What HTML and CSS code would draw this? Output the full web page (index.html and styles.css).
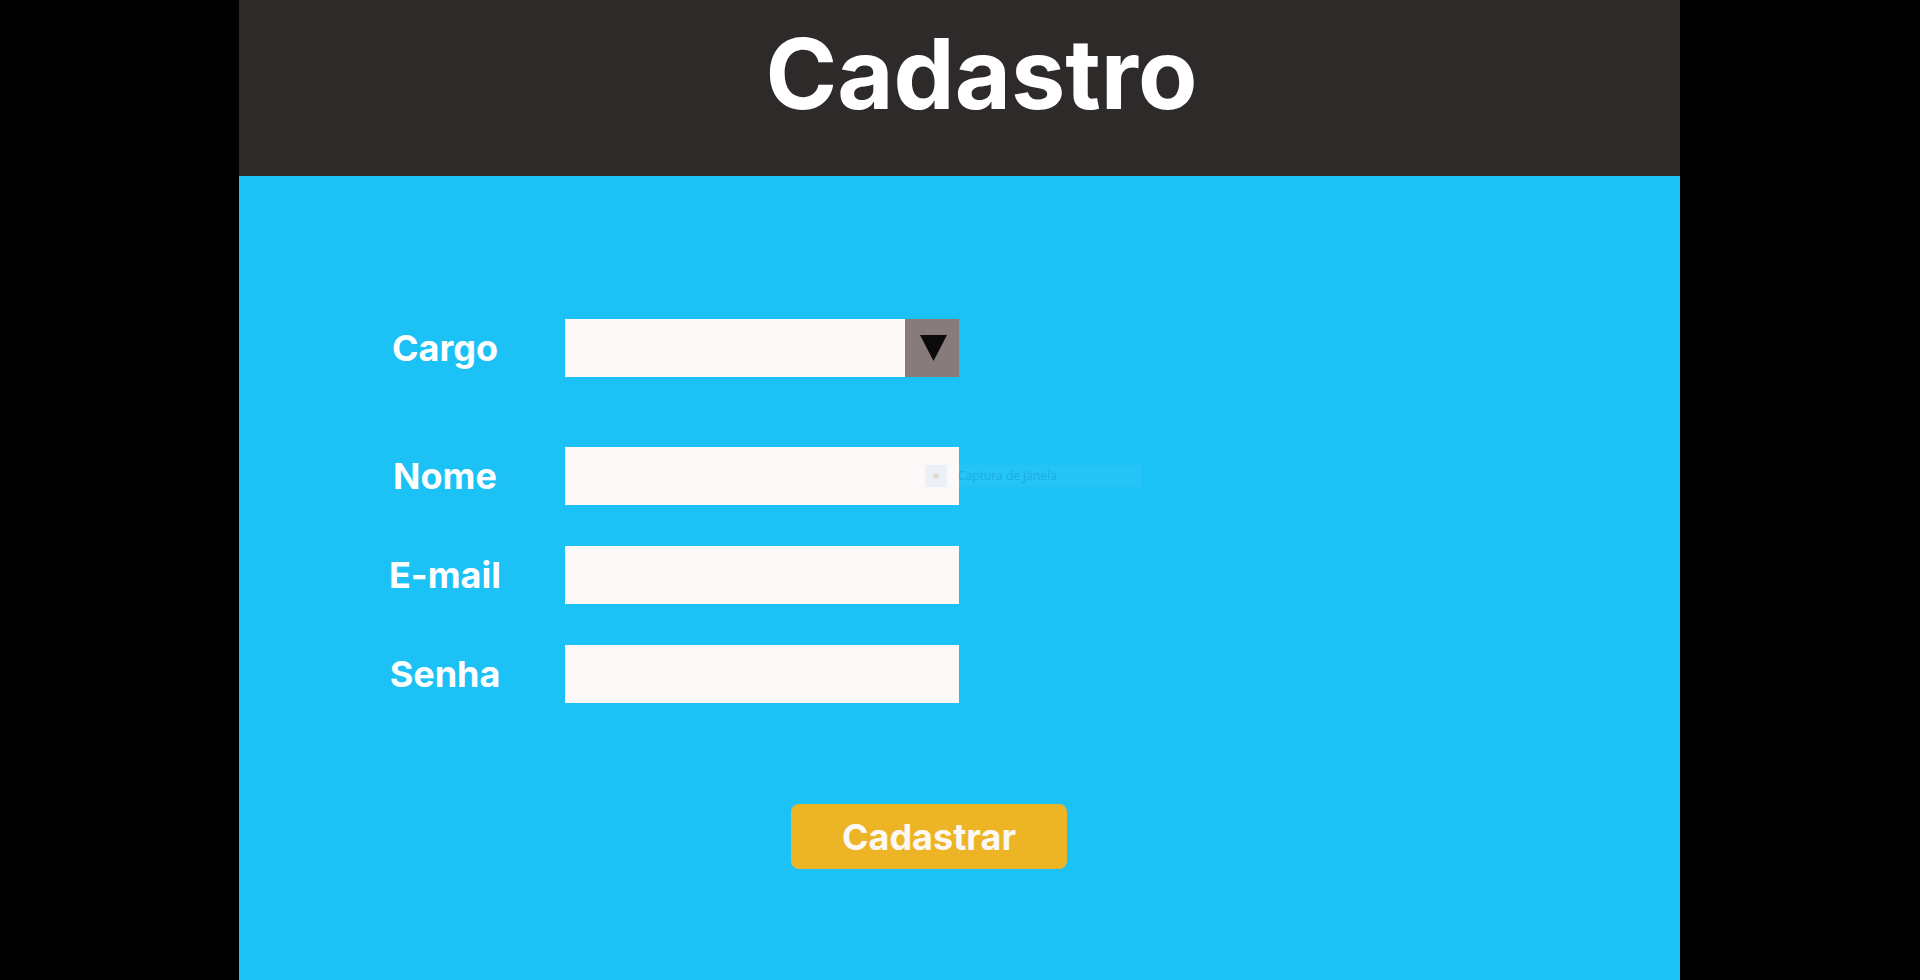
FILE: index.html
```html
<!DOCTYPE html>
<html lang="pt-BR">
<head>
<meta charset="utf-8">
<title>Cadastro</title>
<link rel="stylesheet" href="styles.css">
</head>
<body>
<div class="page">
  <header class="header">
    <h1 class="title">Cadastro</h1>
  </header>
  <main class="main">
    <form class="form">
      <div class="field field-first">
        <label class="label">Cargo</label>
        <div class="select">
          <div class="select-value"></div>
          <div class="select-arrow">
            <svg width="27" height="26" viewBox="0 0 27 26"><polygon points="0,0 27,0 13.5,26" fill="#0b0b0b"/></svg>
          </div>
        </div>
      </div>
      <div class="field">
        <label class="label">Nome</label>
        <input class="input" type="text">
      </div>
      <div class="field">
        <label class="label">E-mail</label>
        <input class="input" type="text">
      </div>
      <div class="field">
        <label class="label">Senha</label>
        <input class="input" type="password">
      </div>
      <div class="actions">
        <button class="button" type="button">Cadastrar</button>
      </div>
    </form>
    <div class="capture-tip">
      <span class="capture-icon"><span class="capture-dot"></span></span>
      <span class="capture-text">Captura de Janela</span>
    </div>
  </main>
</div>
</body>
</html>
```
FILE: styles.css
```css
html, body {
  margin: 0;
  padding: 0;
  background: #000;
}

body {
  font-family: "Inter", "Noto Sans", sans-serif;
  overflow: hidden;
}

.page {
  width: 1441px;
  margin: 0 0 0 239px;
  height: 980px;
  overflow: hidden;
  background: #1cc2f6;
}

.header {
  height: 176px;
  box-sizing: border-box;
  background: #2e2a29;
  padding-top: 25px;
  padding-left: 44px;
  text-align: center;
}

.title {
  margin: 0;
  font-size: 97px;
  line-height: 1;
  font-weight: 700;
  color: #ffffff;
}

.main {
  position: relative;
  padding-top: 143px;
}

.form {
  display: flex;
  flex-direction: column;
  gap: 41px;
  padding-left: 96px;
}

.field {
  display: grid;
  grid-template-columns: 220px 394px;
  column-gap: 10px;
  align-items: center;
}

.field-first {
  margin-bottom: 29px;
}

.label {
  text-align: center;
  color: #ffffff;
  font-size: 36px;
  font-weight: 700;
  line-height: 1;
}

.input {
  display: block;
  width: 394px;
  height: 58px;
  box-sizing: border-box;
  border: none;
  outline: none;
  margin: 0;
  padding: 0 12px;
  background: #fdf9f8;
  font-family: inherit;
  font-size: 20px;
}

.select {
  display: flex;
  width: 394px;
  height: 58px;
}

.select-value {
  flex: 1;
  background: #fdf9f8;
}

.select-arrow {
  width: 54px;
  background: #877c7b;
  display: flex;
  justify-content: center;
  align-items: center;
  padding-left: 3px;
  box-sizing: border-box;
}

.actions {
  padding-left: 456px;
  padding-top: 60px;
}

.button {
  display: block;
  width: 276px;
  height: 65px;
  border: none;
  border-radius: 8px;
  background: #edb526;
  color: #fbf8f6;
  font-family: inherit;
  font-size: 36px;
  font-weight: 700;
  line-height: 1;
  padding: 0;
  cursor: pointer;
}

.capture-tip {
  position: absolute;
  left: 686px;
  top: 289px;
  width: 216px;
  height: 22px;
  display: flex;
  align-items: center;
  background: rgba(255, 255, 255, 0.04);
}

.capture-icon {
  width: 22px;
  height: 22px;
  background: rgba(215, 228, 248, 0.45);
  display: flex;
  justify-content: center;
  align-items: center;
}

.capture-dot {
  width: 6px;
  height: 6px;
  border-radius: 50%;
  background: rgba(225, 215, 200, 0.8);
}

.capture-text {
  margin-left: 11px;
  font-family: "Open Sans", "Noto Sans", sans-serif;
  font-size: 12px;
  line-height: 1;
  color: rgba(10, 110, 190, 0.3);
}
```
